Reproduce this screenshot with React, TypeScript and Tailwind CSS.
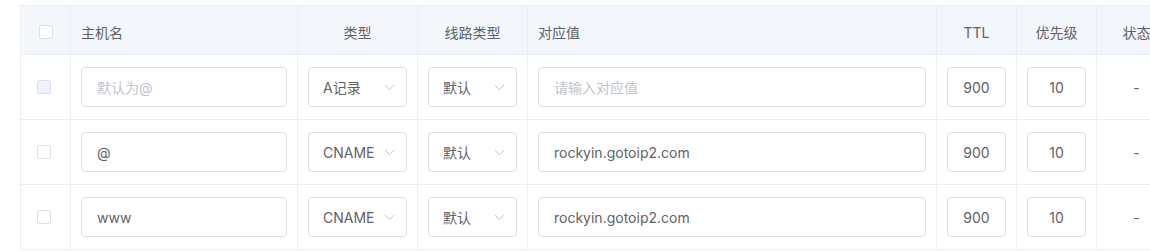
import React from "react";

const font = { fontFamily: 'Inter, "Noto Sans CJK SC", sans-serif' };

function Chevron() {
  return (
    <svg width="11" height="7" viewBox="0 0 11 7" className="shrink-0">
      <polyline points="0.8,1 5.5,5.6 10.2,1" fill="none" stroke="#c0c4cc" strokeWidth="1" />
    </svg>
  );
}

function Checkbox({ disabled }: { disabled?: boolean }) {
  return (
    <div
      className={`w-[14px] h-[14px] rounded-[2px] border border-[#dcdfe6] ${disabled ? "bg-[#edf2fc]" : "bg-white"}`}
    />
  );
}

function Input({ value, placeholder, w, center }: { value?: string; placeholder?: string; w: string; center?: boolean }) {
  return (
    <div
      className={`${w} h-[40px] rounded-[4px] border border-[#dcdfe6] bg-white flex items-center ${center ? "justify-center" : "px-[15px]"} text-[14px]`}
    >
      {value ? (
        <span className="text-[#606266]">{value}</span>
      ) : (
        <span className="text-[#c0c4cc]">{placeholder}</span>
      )}
    </div>
  );
}

function Select({ value, w }: { value: string; w: string }) {
  return (
    <div
      className={`${w} h-[40px] rounded-[4px] border border-[#dcdfe6] bg-white flex items-center pl-[14px] pr-[11px] text-[14px] overflow-hidden`}
    >
      <span className="text-[#606266] flex-1 whitespace-nowrap overflow-hidden">{value}</span>
      <Chevron />
    </div>
  );
}

const cols = "grid grid-cols-[50px_227px_120px_110px_409px_80px_80px_80px]";
const cell = "border-r border-b border-[#ebeef5] flex items-center";

function Row({ disabled, host, type, value }: { disabled?: boolean; host?: string; type: string; value?: string }) {
  return (
    <div className={`${cols} h-[65px]`}>
      <div className={`${cell} pl-[16px]`}>
        <Checkbox disabled={disabled} />
      </div>
      <div className={`${cell} pl-[10px]`}>
        <Input w="w-[206px]" value={host} placeholder="默认为@" />
      </div>
      <div className={`${cell} pl-[10px]`}>
        <Select w="w-[99px]" value={type} />
      </div>
      <div className={`${cell} pl-[10px]`}>
        <Select w="w-[89px]" value="默认" />
      </div>
      <div className={`${cell} pl-[10px]`}>
        <Input w="w-[388px]" value={value} placeholder="请输入对应值" />
      </div>
      <div className={`${cell} pl-[10px]`}>
        <Input w="w-[59px]" value="900" center />
      </div>
      <div className={`${cell} pl-[10px]`}>
        <Input w="w-[59px]" value="10" center />
      </div>
      <div className={`${cell} justify-center text-[14px] text-[#606266]`}>-</div>
    </div>
  );
}

export default function App() {
  return (
    <div className="w-[1150px] h-[252px] bg-white overflow-hidden pt-[5px] pl-[20px]" style={font}>
      <div className="w-[1156px] border-l border-t border-[#ebeef5]">
        <div className={`${cols} h-[49px] bg-[#f3f6fb] text-[14px] text-[#606266]`}>
          <div className={`${cell} pl-[18px] pt-[4px]`}>
            <Checkbox />
          </div>
          <div className={`${cell} pl-[10px] pt-[4px]`}>主机名</div>
          <div className={`${cell} justify-center pt-[4px]`}>类型</div>
          <div className={`${cell} justify-center pt-[4px]`}>线路类型</div>
          <div className={`${cell} pl-[10px] pt-[4px]`}>对应值</div>
          <div className={`${cell} justify-center pt-[4px]`}>TTL</div>
          <div className={`${cell} justify-center pt-[4px]`}>优先级</div>
          <div className={`${cell} justify-center pt-[4px]`}>状态</div>
        </div>
        <Row disabled type="A记录" />
        <Row host="@" type="CNAME" value="rockyin.gotoip2.com" />
        <Row host="www" type="CNAME" value="rockyin.gotoip2.com" />
      </div>
    </div>
  );
}
